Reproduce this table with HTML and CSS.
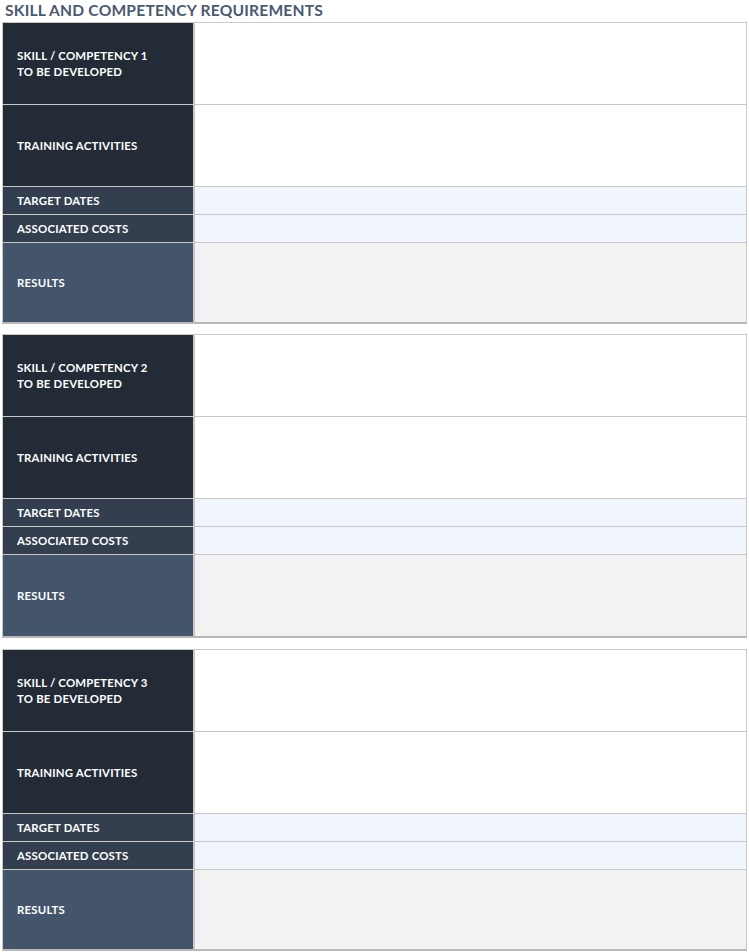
FILE: index.html
```html
<!DOCTYPE html>
<html>
<head>
<meta charset="utf-8">
<link rel="stylesheet" href="styles.css">
</head>
<body>
<div class="page">
  <h1 class="title">SKILL AND COMPETENCY REQUIREMENTS</h1>
  <div class="block">
    <div class="lbl dark tall">SKILL / COMPETENCY 1<br>TO BE DEVELOPED</div><div class="val white"></div>
    <div class="lbl dark tall">TRAINING ACTIVITIES</div><div class="val white"></div>
    <div class="lbl mid short">TARGET DATES</div><div class="val blue"></div>
    <div class="lbl mid short">ASSOCIATED COSTS</div><div class="val blue"></div>
    <div class="lbl slate res">RESULTS</div><div class="val grey"></div>
  </div>
  <div class="block">
    <div class="lbl dark tall">SKILL / COMPETENCY 2<br>TO BE DEVELOPED</div><div class="val white"></div>
    <div class="lbl dark tall">TRAINING ACTIVITIES</div><div class="val white"></div>
    <div class="lbl mid short">TARGET DATES</div><div class="val blue"></div>
    <div class="lbl mid short">ASSOCIATED COSTS</div><div class="val blue"></div>
    <div class="lbl slate tall">RESULTS</div><div class="val grey"></div>
  </div>
  <div class="block last">
    <div class="lbl dark tall">SKILL / COMPETENCY 3<br>TO BE DEVELOPED</div><div class="val white"></div>
    <div class="lbl dark tall">TRAINING ACTIVITIES</div><div class="val white"></div>
    <div class="lbl mid short">TARGET DATES</div><div class="val blue"></div>
    <div class="lbl mid short">ASSOCIATED COSTS</div><div class="val blue"></div>
    <div class="lbl slate res">RESULTS</div><div class="val grey"></div>
  </div>
</div>
</body>
</html>
```

FILE: styles.css
```css
html, body {
  margin: 0;
  padding: 0;
  background: #ffffff;
}
.page {
  width: 745px;
  padding: 0 0 0 2px;
  display: flex;
  flex-direction: column;
  gap: 10px;
}
.title {
  margin: 0 0 -10px 3px;
  height: 22px;
  font-family: "Lato", "Liberation Sans", sans-serif;
  font-weight: 700;
  font-size: 15.6px;
  line-height: 20px;
  color: #4a5a70;
  letter-spacing: 0.2px;
}
.block {
  display: grid;
  grid-template-columns: 190px 1fr;
  gap: 1px 2px;
  background: #c8c8c8;
  border: 1px solid #c8c8c8;
  border-bottom: 2px solid #b8b8b8;
}
.last { margin-top: 1px; }
.lbl {
  display: flex;
  align-items: center;
  padding-left: 14px;
  font-family: "Lato", "Liberation Sans", sans-serif;
  font-weight: 700;
  font-size: 11.4px;
  line-height: 16px;
  color: #ffffff;
  letter-spacing: 0.2px;
}
.tall { height: 81px; }
.res { height: 79px; }
.short { height: 27px; }
.dark { background: #222b36; }
.mid { background: #333f4f; }
.slate { background: #44546a; }
.white { background: #ffffff; }
.blue { background: #f1f5fc; }
.grey { background: #f2f2f2; }
```
